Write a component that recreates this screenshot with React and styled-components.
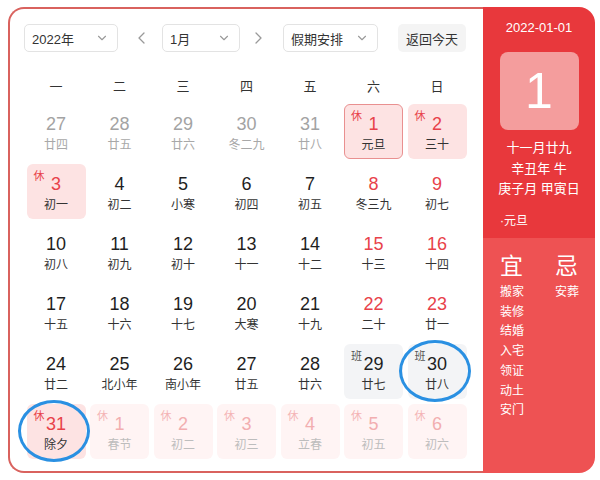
import React from 'react';
import styled, { createGlobalStyle } from 'styled-components';

const GlobalStyle = createGlobalStyle`
  body {
    margin: 0;
    background: #ffffff;
    font-family: 'Liberation Sans', 'Noto Sans CJK SC', sans-serif;
  }
`;

const weekdays = ['一', '二', '三', '四', '五', '六', '日'];

// kind: prev | normal | weekend | holiday | work | next
const days = [
  { d: 27, l: '廿四', kind: 'prev' },
  { d: 28, l: '廿五', kind: 'prev' },
  { d: 29, l: '廿六', kind: 'prev' },
  { d: 30, l: '冬二九', kind: 'prev' },
  { d: 31, l: '廿八', kind: 'prev' },
  { d: 1, l: '元旦', kind: 'holiday', selected: true },
  { d: 2, l: '三十', kind: 'holiday' },
  { d: 3, l: '初一', kind: 'holiday' },
  { d: 4, l: '初二', kind: 'normal' },
  { d: 5, l: '小寒', kind: 'normal' },
  { d: 6, l: '初四', kind: 'normal' },
  { d: 7, l: '初五', kind: 'normal' },
  { d: 8, l: '冬三九', kind: 'weekend' },
  { d: 9, l: '初七', kind: 'weekend' },
  { d: 10, l: '初八', kind: 'normal' },
  { d: 11, l: '初九', kind: 'normal' },
  { d: 12, l: '初十', kind: 'normal' },
  { d: 13, l: '十一', kind: 'normal' },
  { d: 14, l: '十二', kind: 'normal' },
  { d: 15, l: '十三', kind: 'weekend' },
  { d: 16, l: '十四', kind: 'weekend' },
  { d: 17, l: '十五', kind: 'normal' },
  { d: 18, l: '十六', kind: 'normal' },
  { d: 19, l: '十七', kind: 'normal' },
  { d: 20, l: '大寒', kind: 'normal' },
  { d: 21, l: '十九', kind: 'normal' },
  { d: 22, l: '二十', kind: 'weekend' },
  { d: 23, l: '廿一', kind: 'weekend' },
  { d: 24, l: '廿二', kind: 'normal' },
  { d: 25, l: '北小年', kind: 'normal' },
  { d: 26, l: '南小年', kind: 'normal' },
  { d: 27, l: '廿五', kind: 'normal' },
  { d: 28, l: '廿六', kind: 'normal' },
  { d: 29, l: '廿七', kind: 'work' },
  { d: 30, l: '廿八', kind: 'work', circled: true },
  { d: 31, l: '除夕', kind: 'holiday', circled: true },
  { d: 1, l: '春节', kind: 'next' },
  { d: 2, l: '初二', kind: 'next' },
  { d: 3, l: '初三', kind: 'next' },
  { d: 4, l: '立春', kind: 'next' },
  { d: 5, l: '初五', kind: 'next' },
  { d: 6, l: '初六', kind: 'next' },
];

const yi = ['搬家', '装修', '结婚', '入宅', '领证', '动土', '安门'];
const ji = ['安葬'];

const Chevron = ({ dir = 'down', size = 14, color = '#999' }) => {
  const d = {
    down: 'M4 6 L8 10 L12 6',
    left: 'M10 3 L5 8 L10 13',
    right: 'M6 3 L11 8 L6 13',
  }[dir];
  return (
    <svg width={size} height={size} viewBox="0 0 16 16" fill="none">
      <path d={d} stroke={color} strokeWidth="1.3" strokeLinecap="round" strokeLinejoin="round" />
    </svg>
  );
};

const cellBg = {
  prev: 'transparent',
  normal: 'transparent',
  weekend: 'transparent',
  holiday: '#fde3e3',
  work: '#f3f4f6',
  next: '#fff4f4',
};

const numColor = {
  prev: '#a3a3a3',
  normal: '#1f1f1f',
  weekend: '#e8424a',
  holiday: '#e8424a',
  work: '#1f1f1f',
  next: '#f2aeb0',
};

const lunarColor = {
  prev: '#a8a8a8',
  normal: '#333333',
  weekend: '#333333',
  holiday: '#333333',
  work: '#333333',
  next: '#bdbdbd',
};

export default function App() {
  return (
    <>
      <GlobalStyle />
      <Card>
        <Main>
          <Toolbar>
            <Select $w={94}>
              <span>2022年</span>
              <Chevron />
            </Select>
            <ArrowBtn $ml={16}>
              <Chevron dir="left" size={16} />
            </ArrowBtn>
            <Select $w={78} $ml={12}>
              <span>1月</span>
              <Chevron />
            </Select>
            <ArrowBtn $ml={10}>
              <Chevron dir="right" size={16} />
            </ArrowBtn>
            <Select $w={95} $ml={17}>
              <span>假期安排</span>
              <Chevron />
            </Select>
            <TodayBtn>返回今天</TodayBtn>
          </Toolbar>

          <WeekRow>
            {weekdays.map(w => (
              <WeekCell key={w}>{w}</WeekCell>
            ))}
          </WeekRow>

          <Grid>
            {days.map((day, i) => (
              <Cell key={i} $kind={day.kind} $selected={day.selected}>
                {(day.kind === 'holiday' || day.kind === 'next') && (
                  <Tag $faded={day.kind === 'next'}>休</Tag>
                )}
                {day.kind === 'work' && <Tag $work>班</Tag>}
                <Num $kind={day.kind}>{day.d}</Num>
                <Lunar $kind={day.kind}>{day.l}</Lunar>
                {day.circled && <Ring />}
              </Cell>
            ))}
          </Grid>
        </Main>

        <Side>
          <SideTop>
            <DateText>2022-01-01</DateText>
            <BigDay>1</BigDay>
            <InfoLine>十一月廿九</InfoLine>
            <InfoLine>辛丑年 牛</InfoLine>
            <InfoLine>庚子月 甲寅日</InfoLine>
            <Festival>·元旦</Festival>
          </SideTop>
          <SideBottom>
            <YiJiCol>
              <YiJiHead>宜</YiJiHead>
              {yi.map(t => (
                <YiJiItem key={t}>{t}</YiJiItem>
              ))}
            </YiJiCol>
            <YiJiCol>
              <YiJiHead>忌</YiJiHead>
              {ji.map(t => (
                <YiJiItem key={t}>{t}</YiJiItem>
              ))}
            </YiJiCol>
          </SideBottom>
        </Side>
      </Card>
    </>
  );
}

const Card = styled.div`
  display: flex;
  width: 587px;
  height: 466px;
  margin: 7px 0 0 8px;
  box-sizing: border-box;
`;

const Main = styled.div`
  flex: 1;
  box-sizing: border-box;
  border: 2px solid #d9625e;
  border-right: none;
  border-radius: 16px 0 0 16px;
  padding: 15px 14px 0 14px;
  background: #ffffff;
`;

const Toolbar = styled.div`
  display: flex;
  align-items: center;
  height: 28px;
`;

const Select = styled.div`
  display: flex;
  align-items: center;
  justify-content: space-between;
  box-sizing: border-box;
  width: ${p => p.$w}px;
  height: 28px;
  margin-left: ${p => p.$ml || 0}px;
  padding: 0 8px 0 7px;
  border: 1px solid #e3e3e3;
  border-radius: 5px;
  font-family: 'Liberation Sans', 'Noto Sans CJK SC', sans-serif;
  font-size: 13px;
  color: #333333;
`;

const ArrowBtn = styled.div`
  display: flex;
  align-items: center;
  justify-content: center;
  width: 16px;
  height: 28px;
  margin-left: ${p => p.$ml}px;
`;

const TodayBtn = styled.div`
  display: flex;
  align-items: center;
  justify-content: center;
  width: 68px;
  height: 28px;
  margin-left: 20px;
  border-radius: 5px;
  background: #f4f4f4;
  font-size: 13px;
  color: #333333;
`;

const WeekRow = styled.div`
  display: grid;
  grid-template-columns: repeat(7, 59px);
  column-gap: 4.5px;
  justify-content: center;
  margin-top: 21px;
  height: 24px;
`;

const WeekCell = styled.div`
  display: flex;
  align-items: center;
  justify-content: center;
  font-size: 13px;
  color: #333333;
`;

const Grid = styled.div`
  display: grid;
  grid-template-columns: repeat(7, 59px);
  grid-auto-rows: 55px;
  column-gap: 4.5px;
  row-gap: 5px;
  justify-content: center;
  margin-top: 7px;
`;

const Cell = styled.div`
  position: relative;
  display: flex;
  flex-direction: column;
  align-items: center;
  box-sizing: border-box;
  padding-top: 8px;
  border-radius: 6px;
  background: ${p => cellBg[p.$kind]};
  border: 1px solid ${p => (p.$selected ? '#e99090' : 'transparent')};
`;

const Tag = styled.span`
  position: absolute;
  top: 5px;
  left: 6px;
  font-size: 11px;
  line-height: 13px;
  color: ${p => (p.$work ? '#555555' : p.$faded ? '#f4b4b6' : '#e8424a')};
`;

const Num = styled.div`
  font-size: 18px;
  line-height: 22px;
  color: ${p => numColor[p.$kind]};
`;

const Lunar = styled.div`
  margin-top: 2px;
  font-size: 12px;
  line-height: 16px;
  color: ${p => lunarColor[p.$kind]};
`;

const Ring = styled.div`
  position: absolute;
  top: -5px;
  left: -10px;
  width: 72px;
  height: 62px;
  box-sizing: border-box;
  border: 3px solid #2a90e2;
  border-radius: 50%;
  pointer-events: none;
`;

const Side = styled.div`
  display: flex;
  flex-direction: column;
  width: 112px;
  border-radius: 0 16px 16px 0;
  overflow: hidden;
  color: #ffffff;
`;

const SideTop = styled.div`
  display: flex;
  flex-direction: column;
  align-items: center;
  height: 231px;
  box-sizing: border-box;
  padding-top: 13px;
  background: #e8383c;
`;

const DateText = styled.div`
  font-size: 13px;
  line-height: 16px;
`;

const BigDay = styled.div`
  display: flex;
  align-items: center;
  justify-content: center;
  width: 79px;
  height: 78px;
  margin-top: 16px;
  margin-bottom: 8px;
  border-radius: 8px;
  background: #f49d9d;
  font-size: 50px;
  color: #ffffff;
`;

const InfoLine = styled.div`
  font-size: 13px;
  line-height: 20.5px;
`;

const Festival = styled.div`
  align-self: flex-start;
  margin: 13px 0 0 17px;
  font-size: 12px;
  line-height: 16px;
`;

const SideBottom = styled.div`
  flex: 1;
  display: flex;
  gap: 19px;
  padding: 14px 0 0 17px;
  background: #ee5253;
`;

const YiJiCol = styled.div`
  display: flex;
  flex-direction: column;
  width: 36px;
`;

const YiJiHead = styled.div`
  font-size: 23px;
  line-height: 28px;
  margin-bottom: 3px;
`;

const YiJiItem = styled.div`
  font-size: 12px;
  line-height: 19.7px;
`;
